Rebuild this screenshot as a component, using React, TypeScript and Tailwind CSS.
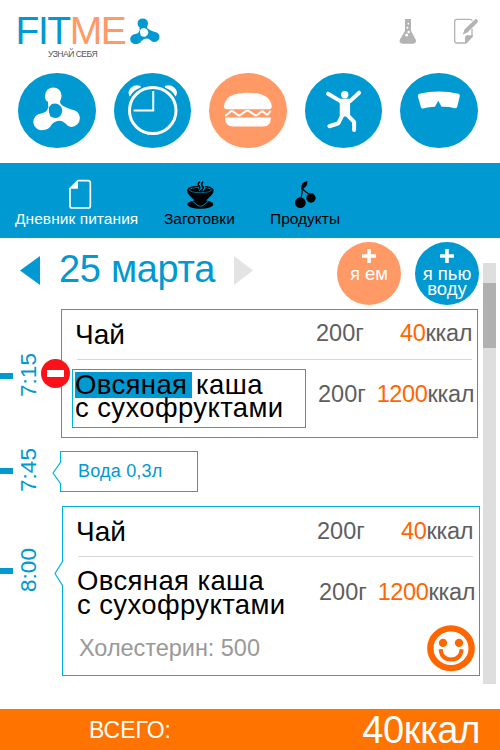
import type { ReactNode } from 'react';

function MoleculeShape({ hole }: { hole: string }) {
  return (
    <>
      <path
        fill="currentColor"
        d="M135 288A25 25 0 0 1 185 288Q184 300 180 306Q180 318 214 329A25 25 0 0 1 214 381Q203 380 196 370Q176 354 155 374Q148 391 126 391A25 25 0 0 1 124 341Q150 338 144 306Q135 302 135 288Z"
      />
      <path fill={hole} d="M155 313Q165 309 176 314Q187 320 187 335Q183 351 172 354Q160 356 151 349Q145 335 147 322Z" />
    </>
  );
}

function RoundButton({ box, orange, children }: { box: string; orange?: boolean; children: ReactNode }) {
  return (
    <button className={`h-[75px] w-[77.5px] shrink-0 rounded-[50%] ${orange ? 'bg-[#ff9966]' : 'bg-[#0099d1]'} text-white`}>
      <svg className="block h-full w-full" viewBox={box} preserveAspectRatio="none">
        {children}
      </svg>
    </button>
  );
}

function Header() {
  return (
    <header className="h-[163px] shrink-0">
      <div className="flex h-[73px] items-start">
        <div className="w-[113px] shrink-0 pl-[14px] pt-[11px]">
          <div className="whitespace-nowrap text-[39px] leading-[39px] tracking-[-1.4px] text-[#0099d1]">
            <span className="ml-[1.5px]">FIT</span>
            <span className="text-[#ff9966]">ME</span>
          </div>
          <div className="-mt-px whitespace-nowrap pl-[34px] text-[8.6px] leading-[10px] tracking-[-0.55px] text-[#555]">УЗНАЙ СЕБЯ</div>
        </div>
        <svg className="ml-[17px] mt-[17.5px] h-[26.5px] w-[29.5px] text-[#0099d1]" viewBox="99 261 141 132" preserveAspectRatio="none">
          <MoleculeShape hole="#fff" />
        </svg>
        <svg className="ml-[239.5px] mt-[18px] h-[27px] w-[18px]" viewBox="448 54 54 81">
          <path fill="#b3b3b3" d="M466 57H484V92L499 121Q500 131 490 131H458Q448 130 450 120L466 92Z" />
          <g fill="#fff">
            <circle cx="476" cy="71" r="2.6" />
            <circle cx="473" cy="83" r="3" />
            <circle cx="477" cy="96" r="3.6" />
            <circle cx="471" cy="105" r="4.6" />
          </g>
        </svg>
        <svg className="ml-[36px] mt-[18px] h-[27px] w-[26px]" viewBox="610 54 78 81">
          <path fill="none" stroke="#b3b3b3" strokeWidth="4" d="M646 129H622Q615 129 615 122V65Q615 58 622 58H660Q667 58 668 62M667 86V110" />
          <path fill="#b3b3b3" d="M639 104L645 88L675 59Q679 55 683 59Q687 64 683 68L654 97Z" />
          <path fill="#b3b3b3" d="M646 131V112Q646 106 653 106H669V110L650 131Z" />
        </svg>
      </div>
      <nav className="flex gap-[18px] pl-[18px]">
        <RoundButton box="54 220 233 224">
          <MoleculeShape hole="#0099d1" />
        </RoundButton>
        <RoundButton box="340 221 233 224">
          <ellipse cx="456.500" cy="333" rx="70" ry="69" fill="none" stroke="currentColor" strokeWidth="9" />
          <path fill="none" stroke="currentColor" strokeWidth="6" d="M458 275V333H399" />
          <path fill="currentColor" d="M387 291Q379 276 391 265Q403 255 418 259Q423 261 419 265Q398 272 389 290Z" />
          <path fill="currentColor" d="M526 291Q534 276 522 265Q510 255 495 259Q490 261 494 265Q515 272 524 290Z" />
        </RoundButton>
        <RoundButton orange box="627 221 232 224">
          <path fill="currentColor" d="M672 322Q674 280 743 280Q812 280 815 322Q815 329 808 329H679Q672 329 672 322Z" />
          <path fill="none" stroke="currentColor" strokeWidth="6" d="M676 349L692 336Q696 333 700 337L713 346Q717 349 721 346L734 337Q742 331 750 337L764 346Q768 349 772 346L783 337Q787 334 791 338L799 345Q803 348 811 334" />
          <path fill="currentColor" d="M675 354H812Q813 381 790 381H697Q675 380 675 354Z" />
        </RoundButton>
        <RoundButton box="162 220 232 224">
          <circle cx="281" cy="285" r="11" fill="currentColor" />
          <path fill="currentColor" d="M262 297H301L297 312V350H266V312Z" />
          <g fill="none" stroke="currentColor" strokeWidth="12" strokeLinecap="round" strokeLinejoin="round">
            <path d="M231 282L268 304M297 304L324 279" />
            <path d="M274 346L262 370L235 379M289 346L309 366V390" />
          </g>
        </RoundButton>
        <RoundButton box="450 220 233 224">
          <path fill="currentColor" d="M508 282Q567 268 626 282Q631 284 630 289L622 321Q621 326 615 325Q595 320 575 321L565 303L555 321Q537 321 520 326Q515 327 513 322L504 291Q503 284 508 282Z" />
        </RoundButton>
      </nav>
    </header>
  );
}

function Tabs() {
  return (
    <div className="flex h-[75px] shrink-0 items-start bg-[#0099d1] pt-[16px] text-[15.500px] leading-[18px] text-black">
      <button className="ml-[15px] w-[125px] text-white">
        <svg className="ml-[53px] block h-[31px] w-[24px]" viewBox="204 57 72 93">
          <path fill="none" stroke="currentColor" strokeWidth="5" d="M234 62H264Q271 62 271 69V137Q271 144 264 144H217Q210 144 210 137V86Z" />
          <path fill="currentColor" d="M234 62V86H210Z" />
        </svg>
        <span className="block whitespace-nowrap text-left tracking-[0.06px]">Дневник питания</span>
      </button>
      <button className="ml-[24px] w-[74px]">
        <svg className="ml-[22px] block h-[31px] w-[28px]" viewBox="558 57 84 93">
          <ellipse cx="601" cy="133" rx="39" ry="13" fill="#000" />
          <path fill="none" stroke="#0099d1" strokeWidth="2.500" d="M577 123L592 136Q601 142 610 136L625 123" />
          <path d="M561 90Q563 77 601 77Q639 77 641 90Q641 99 634 106L608 132Q601 137 594 132L568 106Q561 99 561 90Z" fill="#000" />
          <ellipse cx="601" cy="90" rx="33" ry="8" fill="none" stroke="#0099d1" strokeWidth="2" />
          <path fill="none" stroke="#0099d1" strokeWidth="9" d="M596 90Q604 83 598 77M606 90Q615 83 608 77" />
          <path fill="none" stroke="#000" strokeWidth="4.500" d="M593 91Q604 85 597 78Q591 72 600 65M604 91Q614 84 607 78Q602 73 609 65" />
        </svg>
        <span className="block whitespace-nowrap text-left">Заготовки</span>
      </button>
      <button className="ml-[32px] w-[74px]">
        <svg className="ml-[23px] block h-[31px] w-[28px]" viewBox="133 57 84 93">
          <circle cx="155" cy="128" r="16" />
          <circle cx="187" cy="114" r="14" />
          <path d="M158 88Q156 66 176 63Q178 80 160 88Z" />
          <path fill="none" stroke="#000" strokeWidth="3.500" d="M157 116Q162 98 160 84Q168 96 185 104" />
        </svg>
        <span className="block whitespace-nowrap text-left">Продукты</span>
      </button>
    </div>
  );
}

function AddButton({ orange, children }: { orange?: boolean; children: ReactNode }) {
  return (
    <button
      className={`mt-[4px] flex h-[63px] w-[64px] shrink-0 flex-col items-center justify-start rounded-[50%] pt-[7px] text-[18.500px] leading-[15px] text-white ${orange ? 'bg-[#ff9966]' : 'bg-[#0099d1]'}`}
    >
      <svg className="block h-[14px] w-[14px] shrink-0" viewBox="0 0 14 14">
        <path stroke="#fff" strokeWidth="3.600" d="M7 0V14M0 7H14" />
      </svg>
      <span className="mt-[3px] block whitespace-nowrap">{children}</span>
    </button>
  );
}

function DateBar() {
  return (
    <div className="flex h-[71px] shrink-0 items-start">
      <svg className="ml-[20px] mt-[18px] h-[29px] w-[20px]" viewBox="0 0 20 29">
        <path fill="#0099d1" d="M0 14.500L20 0V29Z" />
      </svg>
      <div className="ml-[19px] mt-[11px] w-[175px] whitespace-nowrap text-[38px] leading-[40px] tracking-[-0.3px] text-[#0099d1]">25 марта</div>
      <svg className="mt-[18px] h-[29px] w-[19px]" viewBox="0 0 19 29">
        <path fill="#e3e3e3" d="M19 14.500L0 0V29Z" />
      </svg>
      <div className="ml-[84px] flex gap-[14px]">
        <AddButton orange>я ем</AddButton>
        <AddButton>
          я пью
          <br />
          воду
        </AddButton>
      </div>
    </div>
  );
}

function TimeMark({ time, className }: { time: string; className: string }) {
  return (
    <div className={`flex shrink-0 items-center ${className}`}>
      <div className="h-[6px] w-[13px] bg-[#0099d1]" />
      <div className="ml-[4px] flex h-[48px] w-[23px] items-center justify-center pb-[2px]">
        <span className="-rotate-90 whitespace-nowrap text-[22.500px] leading-[24px] text-[#0099d1]">{time}</span>
      </div>
    </div>
  );
}

function Amounts({ kcal, className }: { kcal: string; className: string }) {
  return (
    <div className={`flex shrink-0 justify-between whitespace-nowrap text-[23.500px] leading-[30px] text-[#5e5e5e] ${className}`}>
      <span>200г</span>
      <span className="tracking-[-0.35px]">
        <span className="text-[#ff6600]">{kcal}</span>ккал
      </span>
    </div>
  );
}

function Notch({ className }: { className: string }) {
  return (
    <svg className={`absolute ${className}`} viewBox="0 0 10 26" preserveAspectRatio="none">
      <path fill="#fff" stroke="#00b2dc" strokeWidth="1.200" d="M9.500 0L1 13L9.500 26" />
      <path fill="#fff" d="M9 1L10 0V26L9 25Z" />
    </svg>
  );
}

export default function App() {
  return (
    <div className="flex h-[750px] w-[500px] flex-col overflow-hidden bg-white font-['Liberation_Sans',Arial,sans-serif]">
      <Header />
      <Tabs />
      <main className="flex h-[471px] shrink-0">
        <div className="w-[483px] shrink-0">
          <DateBar />
          <section className="flex h-[142px] items-start">
            <TimeMark time="7:15" className="mt-[43px] w-[61px]" />
            <div className="relative h-[129px] w-[417px] shrink-0 border border-[#00b2dc]">
              <div className="flex h-[49px] items-start">
                <span className="ml-[13px] mt-[10px] w-[241px] text-[28px] leading-[30px]">Чай</span>
                <Amounts kcal="40" className="mt-[8px] w-[156px]" />
              </div>
              <div className="ml-[15px] h-px w-[395px] bg-[#d6d6d6]" />
              <div className="flex items-start">
                <div className="ml-[10px] mt-[9px] h-[59px] w-[234px] shrink-0 whitespace-nowrap border border-[#00b2dc] pl-[2px] pt-[2px] text-[27.500px] leading-[25px] tracking-[0.38px]">
                  <div className="flex h-[23px]">
                    <span className="h-[26px] w-[117px] bg-[#0099d1]">Овсяная</span>
                    <span className="ml-[4px]">каша</span>
                  </div>
                  <div className="relative">с сухофруктами</div>
                </div>
                <Amounts kcal="1200" className="ml-[12px] mt-[19px] w-[156px]" />
              </div>
              <button className="absolute -left-[21px] top-[49px] flex h-[29px] w-[29px] items-center justify-center rounded-full bg-[#fb1118]">
                <span className="h-[7px] w-[17px] bg-white" />
              </button>
            </div>
          </section>
          <section className="flex h-[55px] items-start">
            <TimeMark time="7:45" className="-mt-[4px] w-[60px]" />
            <div className="relative h-[41px] w-[138px] border border-[#00b2dc]">
              <Notch className="-left-[9px] top-[9px] h-[24px] w-[10px]" />
              <span className="ml-[17px] mt-[4px] block whitespace-nowrap text-[18px] leading-[30px] tracking-[0.2px] text-[#0099d1]">Вода 0,3л</span>
            </div>
          </section>
          <section className="flex items-start">
            <TimeMark time="8:00" className="mt-[41px] w-[62px]" />
            <div className="relative h-[170px] w-[418px] shrink-0 border border-[#00b2dc]">
              <Notch className="-left-[9px] top-[53px] h-[27px] w-[10px]" />
              <div className="flex h-[49px] items-start">
                <span className="ml-[13px] mt-[10px] w-[241px] text-[28px] leading-[30px]">Чай</span>
                <Amounts kcal="40" className="mt-[9px] w-[156px]" />
              </div>
              <div className="ml-[15px] h-px w-[395px] bg-[#d6d6d6]" />
              <div className="flex h-[68px] items-start">
                <div className="ml-[14px] mt-[12px] w-[241px] shrink-0 whitespace-nowrap text-[27.500px] leading-[23.500px] tracking-[0.38px]">
                  Овсяная каша
                  <br />с сухофруктами
                </div>
                <Amounts kcal="1200" className="ml-px mt-[20px] w-[156px]" />
              </div>
              <div className="flex items-start">
                <span className="ml-[16px] mt-[8px] w-[348px] whitespace-nowrap text-[23.500px] leading-[30px] tracking-[-0.04px] text-[#999]">Холестерин: 500</span>
                <svg className="h-[46.5px] w-[48px] text-[#ff6600]" viewBox="531 104 144 140" preserveAspectRatio="none">
                  <g fill="none" stroke="currentColor">
                    <ellipse cx="603" cy="174" rx="62" ry="60" strokeWidth="19" />
                    <path strokeWidth="12" d="M572 177Q574 208 603 208Q632 208 635 177" />
                  </g>
                  <g fill="currentColor">
                    <circle cx="579" cy="158" r="12.500" />
                    <circle cx="627" cy="158" r="12.500" />
                  </g>
                </svg>
              </div>
            </div>
          </section>
        </div>
        <div className="mt-[25px] h-[421px] w-[13px] bg-[#dedede] pt-[20px]">
          <div className="h-[65px] bg-[#b0b0b0]" />
        </div>
      </main>
      <footer className="flex h-[41px] shrink-0 items-start justify-between bg-[#ff7300] pl-[89px] pr-[20px] text-white">
        <span className="mt-[6px] text-[23px] leading-[30px]">ВСЕГО:</span>
        <span className="mt-px text-[38px] leading-[40px] tracking-[-0.3px]">40ккал</span>
      </footer>
    </div>
  );
}
